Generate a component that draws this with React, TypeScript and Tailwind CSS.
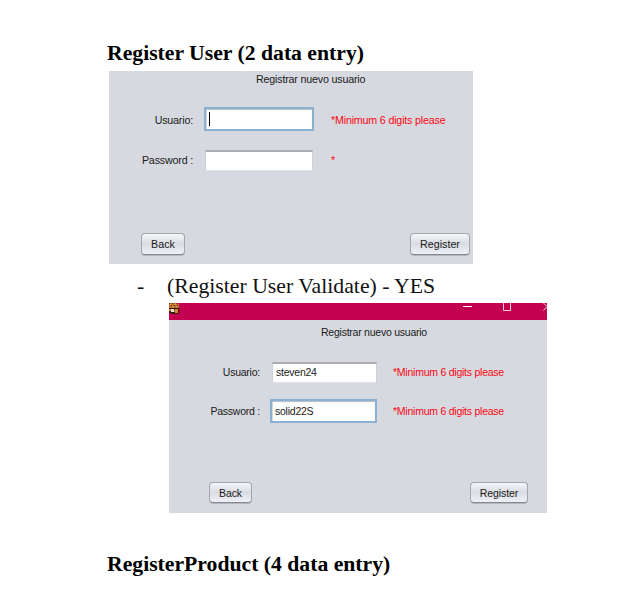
import React from "react";

type FieldProps = { value?: string; focused?: boolean; caret?: boolean; size: string };

function Field({ value, focused, caret, size }: FieldProps) {
  const look = focused
    ? "border-2 border-[#8ab0d2] pl-[3px] shadow-[inset_0_1px_1px_#b9bcc2,inset_1px_0_0_#d9dce2]"
    : "border border-[#cdd0d6] border-t-2 border-t-[#abadb3] border-b-[#dfe1e6] pb-px pl-[3px]";
  return (
    <div className={`flex shrink-0 items-center bg-white ${look} ${size}`}>
      {caret && <span className="h-[14px] w-px bg-black" />}
      {value && <span>{value}</span>}
    </div>
  );
}

function Button({ label, size }: { label: string; size: string }) {
  return (
    <button
      className={`flex items-center justify-center rounded-[4px] border border-[#a3a6ac] border-b-[#85888e] bg-linear-to-b from-[#f5f6f8] via-[#d9dce2] to-[#eff1f7] shadow-[0_1px_0_#b4b7bd] ${size}`}
    >
      {label}
    </button>
  );
}

function BurgerIcon() {
  return (
    <svg width="11" height="11" viewBox="0 0 11 11" shapeRendering="crispEdges">
      <path d="M0 0h9v1h1v4H0z" fill="#b86f30" />
      <path d="M0 0h1v1H0zM3 0h1v1H3zM7 0h1v1H7zM2 2h1v1H2zM5 2h1v1H5zM8 2h1v1H8z" fill="#6b3512" />
      <path d="M1 1h2v1H1zM5 1h2v1H5zM3 3h2v1H3zM7 3h2v1H7z" fill="#e0913f" />
      <path d="M0 5h11v1H0zM0 6h10v4H0zM2 10h7v1H2z" fill="#3a1c0e" />
      <path d="M0 6h2v2H0zM6 6h3v4H6z" fill="#d98330" />
      <path d="M2 6h3v3H2z" fill="#eee2cc" />
      <path d="M5 7h1v2H5z" fill="#7d8589" />
    </svg>
  );
}

function TitleBar() {
  return (
    <div className="flex h-[17px] justify-between bg-[#c40050]">
      <BurgerIcon />
      <svg width="88" height="12" viewBox="0 0 88 12" fill="none" stroke="#fff">
        <path d="M4 3.5h9" />
        <path d="M44.5 0v7.5h7V0" stroke="#f4c9da" />
        <path d="M84.5 0l3.5 3.5L84.5 7.5" stroke="#f4c9da" />
      </svg>
    </div>
  );
}

export default function App() {
  return (
    <main className="flex h-[611px] w-[638px] flex-col overflow-hidden bg-white font-['Liberation_Sans',Arial,sans-serif] leading-4 whitespace-nowrap text-[#1a1a1a]">
      <h1 className="mt-[40px] ml-[107px] h-[31px] font-['Liberation_Serif',serif] text-[21.7px] leading-[26px] font-bold text-black">
        Register User (2 data entry)
      </h1>

      <section className="ml-[109px] flex h-[193px] w-[364px] flex-col bg-[#d6d9e0] text-[10.7px] tracking-[-0.18px]">
        <h2 className="pl-[147px]">Registrar nuevo usuario</h2>
        <div className="mt-5 flex h-6 items-center">
          <span className="w-[84px] pt-px text-right">Usuario:</span>
          <Field focused caret size="ml-[11px] h-6 w-[110px]" />
          <span className="ml-[17px] pt-px text-[#fb0712]">*Minimum 6 digits please</span>
        </div>
        <div className="mt-[17px] flex h-6 items-center">
          <span className="w-[84px] text-right">Password :</span>
          <Field size="ml-3 h-[21px] w-[108px]" />
          <span className="ml-[18px] text-[#fb0712]">*</span>
        </div>
        <div className="mt-[61px] flex justify-between pr-[3px] pl-8 tracking-normal">
          <Button label="Back" size="h-[22px] w-[44px]" />
          <Button label="Register" size="h-[22px] w-[60px]" />
        </div>
      </section>

      <div className="mt-[9px] ml-[137px] flex h-[30px] font-['Liberation_Serif',serif] text-[21.75px] leading-[26px] text-[#111]">
        <span className="w-[30px]">-</span>
        <span>(Register User Validate) - YES</span>
      </div>

      <section className="ml-[169px] flex h-[210px] w-[378px] flex-col bg-[#d6d9e0] text-[10.5px] tracking-[-0.24px]">
        <TitleBar />
        <h2 className="mt-1 pl-[152px]">Registrar nuevo usuario</h2>
        <div className="mt-5 flex h-6 items-center">
          <span className="w-[91px] text-right">Usuario:</span>
          <Field value="steven24" size="ml-3 h-[21px] w-[105px]" />
          <span className="ml-[16px] text-[#fb0712]">*Minimum 6 digits please</span>
        </div>
        <div className="mt-[15px] flex h-6 items-center">
          <span className="w-[91px] text-right">Password :</span>
          <Field value="solid22S" focused size="ml-[10px] h-6 w-[107px]" />
          <span className="ml-[16px] text-[#fb0712]">*Minimum 6 digits please</span>
        </div>
        <div className="mt-[59px] flex justify-between pr-[19px] pl-10 tracking-[-0.1px]">
          <Button label="Back" size="h-[21px] w-[43px]" />
          <Button label="Register" size="h-[21px] w-[58px]" />
        </div>
      </section>

      <h1 className="mt-[38px] ml-[107px] font-['Liberation_Serif',serif] text-[21.7px] leading-[26px] font-bold text-black">
        RegisterProduct (4 data entry)
      </h1>
    </main>
  );
}
